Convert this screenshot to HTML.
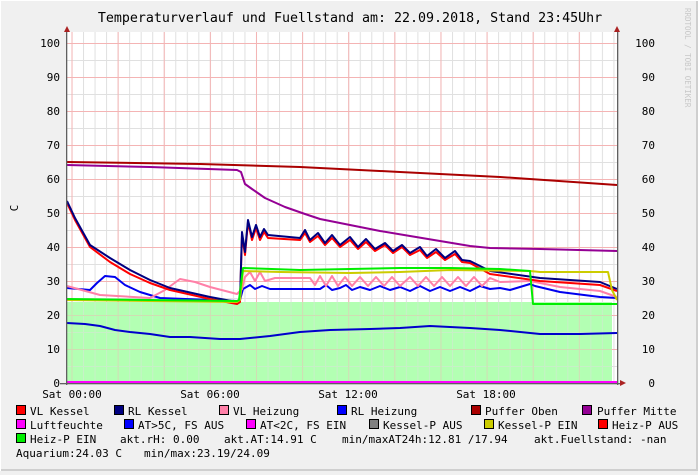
<!DOCTYPE html>
<html><head><meta charset="utf-8"><style>
html,body{margin:0;padding:0}
body{width:698px;height:471px;overflow:hidden;background:#f0f0f0;font-family:"DejaVu Sans Mono","Liberation Mono",monospace;}
text{white-space:pre}
</style></head><body>
<svg width="698" height="471" xmlns="http://www.w3.org/2000/svg" font-family="DejaVu Sans Mono, Liberation Mono, monospace">
<defs>
<pattern id="gv" x="71.5" y="0" width="11.53" height="471" patternUnits="userSpaceOnUse"><rect x="0" y="0" width="1" height="471" fill="#e0e0e0"/></pattern>
<pattern id="gh" x="0" y="43" width="698" height="17" patternUnits="userSpaceOnUse"><rect x="0" y="0" width="698" height="1" fill="#e0e0e0"/></pattern>
<pattern id="rv" x="71.5" y="0" width="46.12" height="471" patternUnits="userSpaceOnUse"><rect x="0" y="0" width="1" height="471" fill="#f4b4b4"/></pattern>
<pattern id="rh" x="0" y="43" width="698" height="34" patternUnits="userSpaceOnUse"><rect x="0" y="0" width="698" height="1" fill="#f4b4b4"/></pattern>
</defs>
<rect x="0" y="0" width="698" height="471" fill="#f0f0f0"/>
<rect x="696" y="0" width="2" height="471" fill="#cfcfcf"/>
<rect x="0" y="469" width="698" height="2" fill="#cfcfcf"/>
<rect x="0" y="0" width="698" height="1" fill="#ffffff"/>
<rect x="0" y="0" width="1" height="471" fill="#ffffff"/>
<text x="350" y="22" font-size="13.3" text-anchor="middle" fill="#000">Temperaturverlauf und Fuellstand am: 22.09.2018, Stand 23:45Uhr</text>
<text transform="translate(685,8) rotate(90)" font-size="7.5" fill="#c8c8c8">RRDTOOL / TOBI OETIKER</text>
<rect x="67" y="32" width="550" height="351" fill="#fff"/>
<rect x="67" y="32" width="550" height="351" fill="url(#gv)"/>
<rect x="67" y="32" width="550" height="351" fill="url(#gh)"/>
<rect x="67" y="32" width="550" height="351" fill="url(#rv)"/>
<rect x="67" y="43" width="550" height="340" fill="url(#rh)"/>
<rect x="67" y="302" width="545" height="81" fill="#b3ffb3"/>
<g opacity="0.45"><rect x="67" y="302" width="545" height="81" fill="url(#gv)"/><rect x="67" y="302" width="545" height="81" fill="url(#gh)"/><rect x="67" y="302" width="545" height="81" fill="url(#rv)"/><rect x="67" y="302" width="545" height="81" fill="url(#rh)"/></g>
<g fill="none" stroke-width="2" stroke-linejoin="round">
<polyline stroke="#aa0000" points="67,162 200,164 300,167 400,172 500,177 617,185"/>
<polyline stroke="#940094" points="67,165 150,167 237,170 241,172 245,184 252,189 265,198 285,207 305,214 320,219 350,225 380,231 410,236 440,241 470,246 490,248 540,249 617,251"/>
<polyline stroke="#0000ee" points="67,288 90,290 97,283 105,276 115,277 125,285 140,292 160,298 237,301 240,300 243,289 250,285 255,289 262,286 270,289 300,289 320,289 326,285 332,290 340,288 346,285 352,290 360,287 370,290 380,286 390,290 400,287 410,291 420,286 430,291 440,287 450,291 460,287 470,291 480,286 490,289 500,288 510,290 520,287 530,284 535,286 560,292 600,297 617,298"/>
<polyline stroke="#ff80a8" points="67,286 100,295 150,298 165,290 180,279 195,282 210,287 237,294 242,289 245,277 250,272 255,281 260,272 265,281 275,278 310,278 315,285 320,276 326,286 332,276 338,286 345,277 352,286 360,277 368,286 376,277 384,286 392,277 400,286 410,277 418,286 426,277 434,286 442,277 450,286 458,277 466,286 474,277 482,286 490,278 500,282 530,281 560,287 600,291 617,297"/>
<polyline stroke="#ff0000" points="67,203 75,220 90,247 110,262 130,274 150,283 170,290 210,299 237,304 240,302 242,235 245,255 248,222 252,240 256,228 260,240 264,232 268,238 300,240 305,233 310,242 318,236 325,245 332,238 340,247 350,240 358,249 366,242 375,251 385,245 393,253 402,247 410,255 420,250 427,258 436,252 445,260 455,254 462,262 470,263 490,274 540,281 600,285 617,291"/>
<polyline stroke="#000080" points="67,201 75,218 90,245 110,258 130,270 150,280 170,288 210,297 237,302 240,300 242,232 245,252 248,220 252,237 256,225 260,237 264,229 268,235 300,238 305,230 310,240 318,233 325,243 332,235 340,245 350,237 358,247 366,239 375,249 385,243 393,251 402,245 410,253 420,247 427,256 436,249 445,258 455,251 462,260 470,261 490,271 540,278 600,282 617,289"/>
<polyline stroke="#cccc00" points="67,300 237,302 240,300 243,271 280,272 350,273 400,272 450,270 530,271 540,272 608,272 612,290 617,300"/>
<polyline stroke="#00ee00" points="67,299 237,301 239,300 243,268 300,270 350,269 400,268 450,268 500,269 530,271 533,304 617,304"/>
<polyline stroke="#0000cc" points="67,323 85,324 100,326 115,330 130,332 150,334 170,337 190,337 220,339 240,339 270,336 300,332 330,330 370,329 400,328 430,326 470,328 500,330 540,334 580,334 617,333"/>
</g>
<rect x="67" y="381" width="550" height="2" fill="#ff00ff"/>
<rect x="66" y="32" width="1.3" height="353" fill="#606060"/>
<rect x="617" y="32" width="1.3" height="353" fill="#606060"/>
<rect x="60" y="383" width="560" height="1.3" fill="#606060"/>
<polygon points="64,32 70,32 67,26" fill="#aa2222"/>
<polygon points="614,32 620,32 617,26" fill="#aa2222"/>
<polygon points="620,380 620,386 626,383" fill="#aa2222"/>
<g font-size="11" fill="#000" text-anchor="end">
<text x="60" y="47">100</text><text x="60" y="81">90</text><text x="60" y="115">80</text><text x="60" y="149">70</text><text x="60" y="183">60</text><text x="60" y="217">50</text><text x="60" y="251">40</text><text x="60" y="285">30</text><text x="60" y="319">20</text><text x="60" y="353">10</text><text x="60" y="387">0</text>
<text x="655" y="47">100</text><text x="655" y="81">90</text><text x="655" y="115">80</text><text x="655" y="149">70</text><text x="655" y="183">60</text><text x="655" y="217">50</text><text x="655" y="251">40</text><text x="655" y="285">30</text><text x="655" y="319">20</text><text x="655" y="353">10</text><text x="655" y="387">0</text>
</g>
<text transform="translate(18,208) rotate(-90)" font-size="11" text-anchor="middle">C</text>
<g font-size="11" text-anchor="middle">
<text x="72" y="398">Sat 00:00</text><text x="210" y="398">Sat 06:00</text><text x="348" y="398">Sat 12:00</text><text x="486" y="398">Sat 18:00</text>
</g>
<g stroke="#000" stroke-width="1">
<rect x="16.5" y="405.5" width="9" height="9" fill="#ff0000"/>
<rect x="114.5" y="405.5" width="9" height="9" fill="#000080"/>
<rect x="219.5" y="405.5" width="9" height="9" fill="#ff80a8"/>
<rect x="337.5" y="405.5" width="9" height="9" fill="#0000ff"/>
<rect x="471.5" y="405.5" width="9" height="9" fill="#aa0000"/>
<rect x="582.5" y="405.5" width="9" height="9" fill="#940094"/>
<rect x="16.5" y="419.5" width="9" height="9" fill="#ff00ff"/>
<rect x="124.5" y="419.5" width="9" height="9" fill="#0000ff"/>
<rect x="246.5" y="419.5" width="9" height="9" fill="#ff00ff"/>
<rect x="369.5" y="419.5" width="9" height="9" fill="#808080"/>
<rect x="484.5" y="419.5" width="9" height="9" fill="#cccc00"/>
<rect x="598.5" y="419.5" width="9" height="9" fill="#ff0000"/>
<rect x="16.5" y="433.5" width="9" height="9" fill="#00ee00"/>
</g>
<g font-size="11" fill="#000">
<text x="30" y="415">VL Kessel</text>
<text x="128" y="415">RL Kessel</text>
<text x="233" y="415">VL Heizung</text>
<text x="351" y="415">RL Heizung</text>
<text x="485" y="415">Puffer Oben</text>
<text x="597" y="415">Puffer Mitte</text>
<text x="30" y="429">Luftfeuchte</text>
<text x="138" y="429">AT&gt;5C, FS AUS</text>
<text x="260" y="429">AT&lt;2C, FS EIN</text>
<text x="383" y="429">Kessel-P AUS</text>
<text x="498" y="429">Kessel-P EIN</text>
<text x="612" y="429">Heiz-P AUS</text>
<text x="30" y="443">Heiz-P EIN</text>
<text x="120" y="443">akt.rH: 0.00</text>
<text x="224" y="443">akt.AT:14.91 C</text>
<text x="342" y="443">min/maxAT24h:12.81 /17.94</text>
<text x="534" y="443">akt.Fuellstand: -nan</text>
<text x="16" y="457">Aquarium:24.03 C</text>
<text x="144" y="457">min/max:23.19/24.09</text>
</g>
</svg>
</body></html>
